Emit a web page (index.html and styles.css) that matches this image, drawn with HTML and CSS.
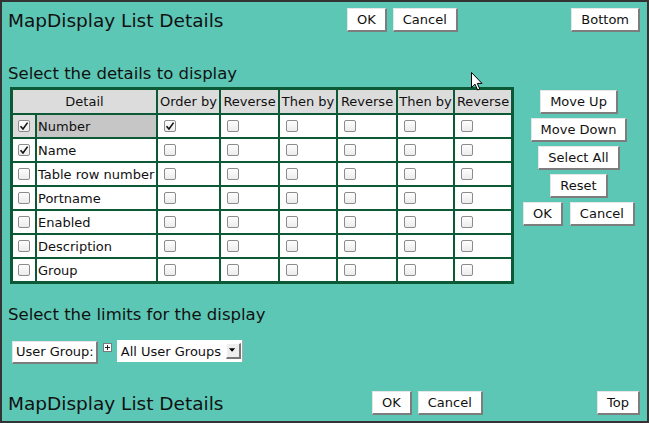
FILE: index.html
```html
<!DOCTYPE html>
<html>
<head>
<meta charset="utf-8">
<link rel="stylesheet" href="styles.css">
</head>
<body>
<div class="page">
  <div class="bar bar-top">
    <div class="title title-top">MapDisplay List Details</div>
    <div class="group"><button class="btn">OK</button><button class="btn">Cancel</button></div>
    <div class="spacer"></div>
    <button class="btn">Bottom</button>
  </div>

  <h2 class="section section-details">Select the details to display</h2>

  <div class="main">
    <table class="grid">
      <colgroup>
        <col class="c-cb"><col class="c-detail"><col class="c-ord"><col class="c-rev1"><col class="c-then1"><col class="c-rev2"><col class="c-then2"><col class="c-rev3">
      </colgroup>
      <thead>
        <tr><th colspan="2">Detail</th><th>Order by</th><th>Reverse</th><th>Then by</th><th>Reverse</th><th>Then by</th><th>Reverse</th></tr>
      </thead>
      <tbody>
        <tr class="sel"><td class="cbcell"><span class="cb on"><svg viewBox="0 0 12 12"><path d="M2.5 6.2 L5 9 L9.6 2.6" /></svg></span></td><td class="label">Number</td><td><span class="cb on"><svg viewBox="0 0 12 12"><path d="M2.5 6.2 L5 9 L9.6 2.6" /></svg></span></td><td><span class="cb"></span></td><td><span class="cb"></span></td><td><span class="cb"></span></td><td><span class="cb"></span></td><td><span class="cb"></span></td></tr>
        <tr><td class="cbcell"><span class="cb on"><svg viewBox="0 0 12 12"><path d="M2.5 6.2 L5 9 L9.6 2.6" /></svg></span></td><td class="label">Name</td><td><span class="cb"></span></td><td><span class="cb"></span></td><td><span class="cb"></span></td><td><span class="cb"></span></td><td><span class="cb"></span></td><td><span class="cb"></span></td></tr>
        <tr><td class="cbcell"><span class="cb"></span></td><td class="label">Table row number</td><td><span class="cb"></span></td><td><span class="cb"></span></td><td><span class="cb"></span></td><td><span class="cb"></span></td><td><span class="cb"></span></td><td><span class="cb"></span></td></tr>
        <tr><td class="cbcell"><span class="cb"></span></td><td class="label">Portname</td><td><span class="cb"></span></td><td><span class="cb"></span></td><td><span class="cb"></span></td><td><span class="cb"></span></td><td><span class="cb"></span></td><td><span class="cb"></span></td></tr>
        <tr><td class="cbcell"><span class="cb"></span></td><td class="label">Enabled</td><td><span class="cb"></span></td><td><span class="cb"></span></td><td><span class="cb"></span></td><td><span class="cb"></span></td><td><span class="cb"></span></td><td><span class="cb"></span></td></tr>
        <tr><td class="cbcell"><span class="cb"></span></td><td class="label">Description</td><td><span class="cb"></span></td><td><span class="cb"></span></td><td><span class="cb"></span></td><td><span class="cb"></span></td><td><span class="cb"></span></td><td><span class="cb"></span></td></tr>
        <tr><td class="cbcell"><span class="cb"></span></td><td class="label">Group</td><td><span class="cb"></span></td><td><span class="cb"></span></td><td><span class="cb"></span></td><td><span class="cb"></span></td><td><span class="cb"></span></td><td><span class="cb"></span></td></tr>
      </tbody>
    </table>

    <div class="side">
      <button class="btn">Move Up</button>
      <button class="btn">Move Down</button>
      <button class="btn">Select All</button>
      <button class="btn">Reset</button>
      <div class="pair"><button class="btn">OK</button><button class="btn">Cancel</button></div>
    </div>
  </div>

  <h2 class="section section-limits">Select the limits for the display</h2>

  <div class="limits">
    <button class="btn btn-ug">User Group:</button>
    <span class="plus"><svg viewBox="0 0 9 9"><rect x="0.5" y="0.5" width="8" height="8" fill="#fff" stroke="#7a7a7a"/><path d="M2 4.5 H7 M4.5 2 V7" stroke="#222" stroke-width="1"/></svg></span>
    <div class="select"><span class="select-text">All User Groups</span><span class="select-arrow"><svg viewBox="0 0 8 5"><path d="M0 0 H7 L3.5 4 Z" fill="#000"/></svg></span></div>
  </div>

  <div class="bar bar-bottom">
    <div class="title title-bottom">MapDisplay List Details</div>
    <div class="group"><button class="btn">OK</button><button class="btn">Cancel</button></div>
    <div class="spacer"></div>
    <button class="btn">Top</button>
  </div>

  <svg class="cursor" viewBox="0 0 12 19" width="12" height="19"><path d="M0.5 0.5 V15.5 L4 12.2 L6.6 18 L8.8 17 L6.3 11.4 L11 11.4 Z" fill="#fff" stroke="#000" stroke-width="1" stroke-linejoin="round"/></svg>
</div>
</body>
</html>
```

FILE: styles.css
```css
* { box-sizing: border-box; }
html, body { margin: 0; padding: 0; }
body {
  font-family: "DejaVu Sans", "Liberation Sans", sans-serif;
  color: #111;
  background: #5dc7b6;
}
.page {
  position: relative;
  width: 649px;
  height: 423px;
  border: 2px solid #333;
  background: #5dc7b6;
  padding: 0 7px 0 6px;
  overflow: hidden;
}
.bar {
  display: flex;
  align-items: center;
  height: 24px;
}
.bar-top { margin-top: 6px; }
.bar-bottom { margin-top: 28px; }
.title {
  font-size: 18.5px;
  line-height: 24px;
  padding-top: 1px;
  color: #111;
  white-space: nowrap;
}
.title-top { width: 339px; }
.title-bottom { width: 364px; }
.group { display: flex; gap: 6px; }
.spacer { flex: 1; }
.btn {
  font-family: "DejaVu Sans", "Liberation Sans", sans-serif;
  font-size: 13px;
  color: #111;
  height: 24px;
  padding: 0 9px;
  background: #fff;
  border-style: solid;
  border-width: 1px 2px 2px 1px;
  border-color: #e6e6e6 #7d7d7d #7d7d7d #e6e6e6;
  border-radius: 0;
  line-height: 20px;
  margin: 0;
  white-space: nowrap;
}
.section {
  margin: 0;
  font-weight: normal;
  font-size: 16.5px;
  line-height: 19px;
  color: #111;
  white-space: nowrap;
}
.section-details { margin-top: 32px; }
.section-limits { margin-top: 21px; }
.main {
  display: flex;
  align-items: flex-start;
  margin-top: 4px;
}
.grid {
  margin-left: 2px;
  border: 1px solid #0b5a35;
  border-spacing: 2px;
  background: #0b5a35;
  table-layout: fixed;
  width: 504px;
  font-size: 13px;
}
.c-cb { width: 22px; }
.c-detail { width: 119px; }
.c-ord { width: 61px; }
.c-rev1 { width: 57px; }
.c-then1 { width: 56px; }
.c-rev2 { width: 58px; }
.c-then2 { width: 55px; }
.c-rev3 { width: 56px; }
.grid th {
  background: #dcdcdc;
  font-weight: normal;
  height: 23px;
  padding: 0;
  text-align: center;
  white-space: nowrap;
  color: #111;
}
.grid td {
  background: #fff;
  height: 22px;
  padding: 0 0 0 6px;
  white-space: nowrap;
  vertical-align: middle;
}
.grid td.cbcell { padding: 0 0 0 5px; }
.grid td.label { padding: 0 0 0 1px; }
.grid tr.sel td.cbcell { background: #dcdcdc; }
.grid tr.sel td.label { background: #c6c6c6; }
.cb {
  display: block;
  width: 12px;
  height: 12px;
  border: 1px solid #8c8c8c;
  border-radius: 2px;
  background: linear-gradient(#fdfdfd, #ececec);
  position: relative;
}
.cb svg {
  position: absolute;
  left: -1px;
  top: -1px;
  width: 12px;
  height: 12px;
}
.cb svg path {
  fill: none;
  stroke: #111;
  stroke-width: 1.6;
}
.side {
  flex: 1;
  display: flex;
  flex-direction: column;
  align-items: center;
  gap: 4px;
  padding-top: 3px;
  padding-left: 4px;
}
.pair { display: flex; gap: 7px; }
.limits {
  display: flex;
  align-items: flex-start;
  margin-top: 16px;
  margin-left: 4px;
  height: 23px;
}
.btn-ug { height: 23px; margin-top: 1px; padding: 0 2px 0 3px; }
.plus {
  display: block;
  width: 9px;
  height: 9px;
  margin: 3px 5px 0 5px;
}
.plus svg { display: block; width: 9px; height: 9px; }
.select {
  display: flex;
  align-items: center;
  width: 126px;
  height: 22px;
  background: #fff;
  font-size: 13px;
  padding-left: 4px;
  border-right: 1px solid #aaa;
}
.select-text { flex: 1; white-space: nowrap; }
.select-arrow {
  display: flex;
  align-items: center;
  justify-content: center;
  width: 15px;
  height: 16px;
  margin-right: 1px;
  background: #eee;
  border-style: solid;
  border-width: 1px 2px 2px 1px;
  border-color: #fff #777 #777 #fff;
}
.select-arrow svg { width: 7px; height: 5px; display: block; }
.cursor {
  position: absolute;
  left: 469px;
  top: 70px;
}
```
